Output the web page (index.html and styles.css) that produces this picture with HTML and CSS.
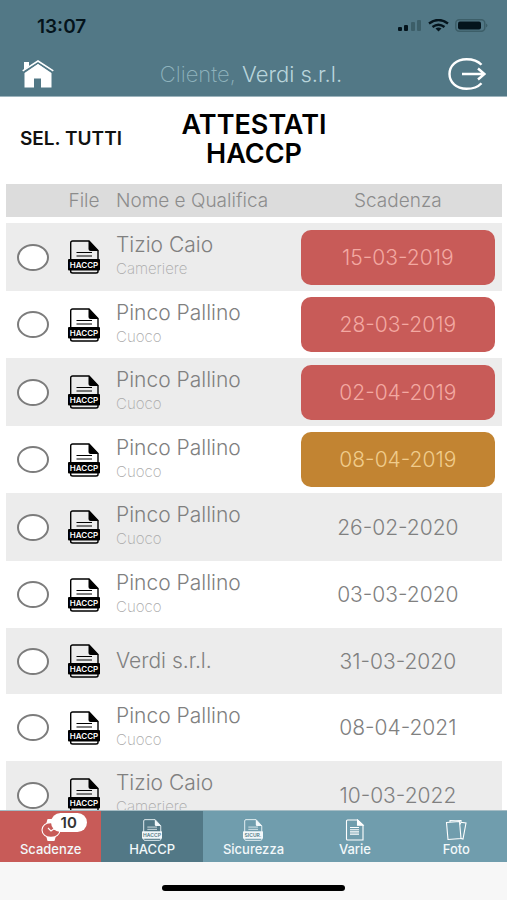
FILE: index.html
```html
<!DOCTYPE html>
<html lang="it">
<head>
<meta charset="utf-8">
<meta name="viewport" content="width=device-width, initial-scale=1">
<title>Attestati HACCP</title>
<link rel="stylesheet" href="styles.css">
</head>
<body>
<svg class="defs" aria-hidden="true">
  <symbol id="doc" viewBox="0 0 32 34">
    <path d="M2.7 21V3Q2.7 1 4.7 1H21L30 10.500V21M2.700 29V31.500Q2.700 33 4.700 33H28Q30 33 30 31.500V29" fill="none" stroke="currentColor" stroke-width="1.400"/>
    <path d="M20.500 0.800L30.500 11H22.500Q20.500 11 20.500 9Z" fill="currentColor"/>
    <path d="M8.500 12.500H24M8.500 16H24" stroke="currentColor" stroke-width="1.200"/>
    <rect x="0" y="19" width="32" height="11.500" rx="1" fill="currentColor"/>
  </symbol>
</svg>

<header class="top">
  <div class="status">
    <span class="clock">13:07</span>
    <svg class="signals" viewBox="0 0 92 14" aria-hidden="true">
      <rect x="1" y="8" width="4" height="4" rx="1"/>
      <rect x="7" y="6" width="4" height="6" rx="1"/>
      <g class="dim"><rect x="14" y="3" width="4" height="9" rx="1"/><rect x="20" y="1" width="4" height="11" rx="1"/></g>
      <g fill="none" stroke="currentColor" stroke-width="2.400">
        <path d="M32 4.500Q41.500-2.500 51 4.500"/>
        <path d="M35.500 8Q41.500 3.500 47.500 8"/>
      </g>
      <path d="M38.500 9.500Q41.500 7.500 44.500 9.500L41.500 12.500Z"/>
      <rect class="shell" x="58.800" y="0.800" width="29" height="11.500" rx="3.500"/>
      <rect x="61" y="2.500" width="23" height="8" rx="2"/>
      <path class="dim" d="M89 4.500Q92 6.500 89 8.500Z"/>
    </svg>
  </div>
  <div class="bar">
    <button class="icon-btn" type="button" aria-label="Home">
      <svg width="32" height="28" viewBox="0 0 32 28" aria-hidden="true">
        <path d="M2 2H7V6L2 10Z" fill="#fff"/>
        <path d="M2.500 13L16 3.800L29.500 13V27.500H19V18.500H12V27.500H2.500Z" fill="#fff"/>
        <path d="M0.700 10.800L16 1L31.300 10.800" fill="none" stroke="#fff" stroke-width="1.600"/>
        <path d="M1.500 12.500L16 3L30.500 12.500" fill="none" stroke="#527886" stroke-width="1"/>
      </svg>
    </button>
    <p class="client"><span>Cliente,</span> Verdi s.r.l.</p>
    <button class="icon-btn" type="button" aria-label="Esci">
      <svg width="38" height="32" viewBox="0 0 38 32" fill="none" stroke="#fff" stroke-width="2.400" aria-hidden="true">
        <path d="M33.500 6.800C29.500 2.500 24 1.200 18.500 1.200C8 1.200 1.500 8 1.500 16C1.500 24 8 30.800 18.500 30.800C24 30.800 29.500 29.500 33.500 25.200"/>
        <path d="M14 16H36M30 10.500L36.500 16L30 21.500"/>
      </svg>
    </button>
  </div>
</header>

<main class="content">
  <div class="heading">
    <button class="select-all" type="button">SEL. TUTTI</button>
    <h1>ATTESTATI HACCP</h1>
  </div>

  <table class="list">
    <colgroup><col class="c-check"><col class="c-file"><col class="c-name"><col class="c-date"></colgroup>
    <thead>
      <tr><th></th><th>File</th><th class="name">Nome e Qualifica</th><th>Scadenza</th></tr>
    </thead>
    <tbody>
      <tr>
        <td><input type="checkbox" aria-label="Seleziona Tizio Caio"></td>
        <td><svg class="file" viewBox="0 0 32 34"><use href="#doc"/><text x="16" y="27.500">HACCP</text></svg></td>
        <td class="name">Tizio Caio<small>Cameriere</small></td>
        <td><span class="date expired">15-03-2019</span></td>
      </tr>
      <tr>
        <td><input type="checkbox" aria-label="Seleziona Pinco Pallino"></td>
        <td><svg class="file" viewBox="0 0 32 34"><use href="#doc"/><text x="16" y="27.500">HACCP</text></svg></td>
        <td class="name">Pinco Pallino<small>Cuoco</small></td>
        <td><span class="date expired">28-03-2019</span></td>
      </tr>
      <tr>
        <td><input type="checkbox" aria-label="Seleziona Pinco Pallino"></td>
        <td><svg class="file" viewBox="0 0 32 34"><use href="#doc"/><text x="16" y="27.500">HACCP</text></svg></td>
        <td class="name">Pinco Pallino<small>Cuoco</small></td>
        <td><span class="date expired">02-04-2019</span></td>
      </tr>
      <tr>
        <td><input type="checkbox" aria-label="Seleziona Pinco Pallino"></td>
        <td><svg class="file" viewBox="0 0 32 34"><use href="#doc"/><text x="16" y="27.500">HACCP</text></svg></td>
        <td class="name">Pinco Pallino<small>Cuoco</small></td>
        <td><span class="date warning">08-04-2019</span></td>
      </tr>
      <tr>
        <td><input type="checkbox" aria-label="Seleziona Pinco Pallino"></td>
        <td><svg class="file" viewBox="0 0 32 34"><use href="#doc"/><text x="16" y="27.500">HACCP</text></svg></td>
        <td class="name">Pinco Pallino<small>Cuoco</small></td>
        <td><span class="date">26-02-2020</span></td>
      </tr>
      <tr>
        <td><input type="checkbox" aria-label="Seleziona Pinco Pallino"></td>
        <td><svg class="file" viewBox="0 0 32 34"><use href="#doc"/><text x="16" y="27.500">HACCP</text></svg></td>
        <td class="name">Pinco Pallino<small>Cuoco</small></td>
        <td><span class="date">03-03-2020</span></td>
      </tr>
      <tr class="company">
        <td><input type="checkbox" aria-label="Seleziona Verdi s.r.l."></td>
        <td><svg class="file" viewBox="0 0 32 34"><use href="#doc"/><text x="16" y="27.500">HACCP</text></svg></td>
        <td class="name">Verdi s.r.l.</td>
        <td><span class="date">31-03-2020</span></td>
      </tr>
      <tr>
        <td><input type="checkbox" aria-label="Seleziona Pinco Pallino"></td>
        <td><svg class="file" viewBox="0 0 32 34"><use href="#doc"/><text x="16" y="27.500">HACCP</text></svg></td>
        <td class="name">Pinco Pallino<small>Cuoco</small></td>
        <td><span class="date">08-04-2021</span></td>
      </tr>
      <tr>
        <td><input type="checkbox" aria-label="Seleziona Tizio Caio"></td>
        <td><svg class="file" viewBox="0 0 32 34"><use href="#doc"/><text x="16" y="27.500">HACCP</text></svg></td>
        <td class="name">Tizio Caio<small>Cameriere</small></td>
        <td><span class="date">10-03-2022</span></td>
      </tr>
    </tbody>
  </table>
</main>

<nav class="tabs">
  <a class="tab due" href="#scadenze">
    <svg width="20" height="22" viewBox="0 0 20 22" fill="none" stroke="#fff" stroke-width="1.100" aria-hidden="true">
      <ellipse cx="10" cy="11" rx="9" ry="7.500"/><path d="M7 9L10 12L14 9"/>
      <path d="M6 3.800L7 0.500H13L14 3.800ZM6 18.200L7 21.500H13L14 18.200Z" fill="#fff"/>
    </svg>
    <span class="badge">10</span>
    Scadenze
  </a>
  <a class="tab active" href="#haccp" aria-current="page">
    <svg class="tab-doc" width="20" height="22" viewBox="0 0 32 34" preserveAspectRatio="none"><use href="#doc"/><text x="16" y="27.500">HACCP</text></svg>
    HACCP
  </a>
  <a class="tab" href="#sicurezza">
    <svg class="tab-doc" width="20" height="22" viewBox="0 0 32 34" preserveAspectRatio="none"><use href="#doc"/><text x="16" y="27.500">SICUR.</text></svg>
    Sicurezza
  </a>
  <a class="tab" href="#varie">
    <svg width="20" height="22" viewBox="0 0 20 22" fill="none" stroke="#fff" stroke-width="1.100" aria-hidden="true">
      <path d="M2.500 1H12.500L18 6V21H2.500Q1.500 21 1.500 20V2Q1.500 1 2.500 1Z"/>
      <path d="M12.500 1L18 6.200H12.500Z" fill="#fff"/>
      <path d="M5 8.500H14M5 10.700H14M5 12.900H14M5 15.100H14"/>
    </svg>
    Varie
  </a>
  <a class="tab" href="#foto">
    <svg width="22" height="22" viewBox="0 0 22 22" fill="none" stroke="#fff" stroke-width="1.100" aria-hidden="true">
      <path d="M1.500 3.500L14.500 2.500L16 19.500L3 20.500Z"/>
      <path d="M5 3V1.500L10.500 1.800L16 1.500V3.200L21 4L18 20L15.800 19.500M14.800 5.500L16.200 3.200"/>
    </svg>
    Foto
  </a>
</nav>
<div class="home-area"><span class="home-line"></span></div>
</body>
</html>
```

FILE: styles.css
```css
* { box-sizing: border-box; }

body {
  margin: 0;
  height: 100vh;
  display: flex;
  flex-direction: column;
  overflow: hidden;
  background: #fff;
  color: #808080;
  font-family: Inter, "Liberation Sans", sans-serif;
  font-weight: 300;
}

button {
  padding: 0;
  border: 0;
  background: none;
  font: inherit;
}

.defs { position: absolute; width: 0; height: 0; }

.top {
  flex: none;
  background: #527886;
  border-bottom: 1px solid #9db4bd;
}

.status {
  display: flex;
  justify-content: space-between;
  align-items: center;
  height: 52px;
  padding: 0 18px 0 37px;
  color: #04141c;
}

.clock { font-size: 19px; font-weight: 600; }
.signals { width: 92px; height: 14px; fill: currentColor; }
.signals .dim { fill: #3c5e68; }
.signals .shell { fill: none; stroke: #3c5e68; stroke-width: 1.5; }

.bar {
  display: flex;
  justify-content: space-between;
  align-items: center;
  height: 44px;
  padding: 0 21px 0 22px;
}

.icon-btn svg { display: block; }

.client { margin: 0; font-size: 22px; color: #b9d5dc; }
.client span { color: #8fb3bd; font-weight: 200; }

.content {
  flex: 1;
  min-height: 0;
  overflow: hidden;
  padding: 0 5px 0 6px;
}

.heading {
  display: grid;
  grid-template-columns: 1fr 160px 1fr;
  align-items: center;
  height: 87px;
  padding-bottom: 4px;
}

.select-all {
  justify-self: start;
  margin-left: 14px;
  font-size: 19px;
  font-weight: 600;
  color: #111;
}

h1 {
  margin: 0;
  font-size: 27px;
  line-height: 29px;
  font-weight: 600;
  text-align: center;
  color: #000;
}

.list {
  width: 100%;
  table-layout: fixed;
  border-spacing: 0;
}

.c-check { width: 54px; }
.c-file { width: 48px; }
.c-date { width: 42%; }

th {
  height: 39px;
  padding: 0;
  border-bottom: 6px solid #fff;
  background: #dcdcdc;
  font-size: 19px;
  font-weight: 300;
  color: #8c8c8c;
}

td { height: 67px; padding: 0; text-align: center; }
tbody tr:nth-child(odd) { background: #ececec; }
tbody tr:nth-child(odd) td { height: 68px; }
tbody tr.company td { height: 66px; }

.list .name { padding-left: 8px; text-align: left; }
td.name { font-size: 21px; line-height: 24px; color: #808080; }

small {
  display: block;
  font-size: 15px;
  font-weight: 200;
  color: #aaa;
}

input[type="checkbox"] {
  appearance: none;
  display: block;
  width: 32px;
  height: 27px;
  margin: 0 auto;
  border: 2px solid #7c7c7c;
  border-radius: 50%;
  background: #fff;
}

.file { display: block; width: 32px; height: 34px; margin: 0 auto; color: #000; }

.file text,
.tab-doc text {
  font-size: 8px;
  font-weight: 600;
  text-anchor: middle;
  fill: #fff;
}

.date {
  display: block;
  margin: 0 7px;
  border-radius: 10px;
  font-size: 21px;
  line-height: 55px;
  color: #808080;
}

.expired { background: #c85b58; color: #f3a9a2; }
.warning { background: #c28432; color: #f0cc8c; }

.tabs {
  flex: none;
  display: grid;
  grid-template-columns: repeat(5, 1fr);
  height: 52px;
  border-top: 1px solid #a5bcc4;
  background: #709dad;
}

.tab {
  position: relative;
  display: flex;
  flex-direction: column;
  align-items: center;
  justify-content: flex-end;
  gap: 1px;
  padding-bottom: 5px;
  font-size: 13px;
  line-height: 15px;
  font-weight: 500;
  color: #f2f8fa;
  text-decoration: none;
}

.tab.due { background: #c85b58; }
.tab.active { background: #527886; }
.tab-doc text { fill: #527886; }

.badge {
  position: absolute;
  top: 2px;
  left: 50%;
  width: 36px;
  border-radius: 10px;
  background: #fff;
  color: #333;
  font-size: 15px;
  font-weight: 600;
  line-height: 19px;
  text-align: center;
}

.home-area {
  flex: none;
  display: flex;
  justify-content: center;
  align-items: center;
  height: 38px;
  padding-top: 14px;
  background: #f7f7f7;
}

.home-line { width: 36%; height: 6px; border-radius: 3px; background: #000; }
```
